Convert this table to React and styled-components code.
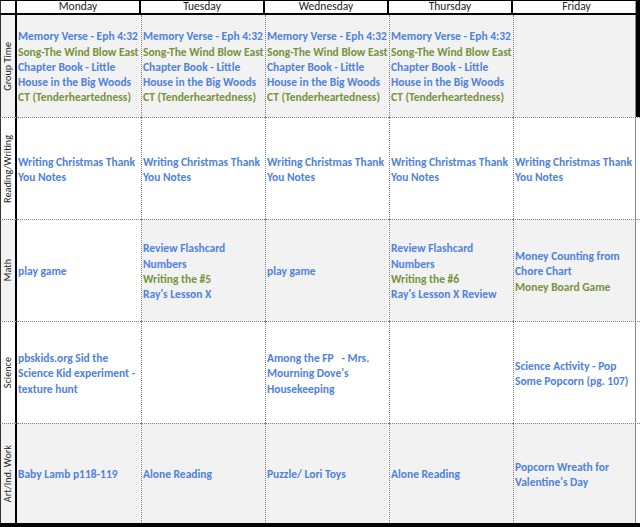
import React from "react";
import styled, { createGlobalStyle } from "styled-components";

const Global = createGlobalStyle`
  html, body { margin: 0; padding: 0; background: #ffffff; }
  body { font-family: "Carlito", "Lato", sans-serif; }
`;

const GRAY = "#f2f2f2";
const BLUE = "#4f82dc";
const GREEN = "#77933c";

const Frame = styled.div`
  width: 640px;
  height: 527px;
  box-sizing: border-box;
  display: grid;
  grid-template-columns: 17px repeat(4, 124px) 1fr;
  grid-template-rows: 15px repeat(4, 102px) 100px;
  border-bottom: 4px solid #000;
  overflow: hidden;
`;

const Corner = styled.div`
  box-sizing: border-box;
  background: #fff;
  border-left: 1px solid #333;
  border-top: 1px solid #000;
  border-right: 2px solid #000;
  border-bottom: 2px solid #000;
`;

const DayHead = styled.div`
  box-sizing: border-box;
  background: #fff;
  border-top: 1px solid #000;
  border-bottom: 2px solid #000;
  border-right: ${(p) => (p.$last ? "none" : "2px solid #000")};
  display: flex;
  align-items: center;
  justify-content: center;
  font-family: "Carlito", "Lato", sans-serif;
  font-size: 11.5px;
  color: #1c1c1c;
  line-height: 1;
  ${(p) =>
    p.$last &&
    `box-shadow: inset -4px 0 0 #000, inset -5px 0 0 #9a9a9a;`}
`;

const Label = styled.div`
  box-sizing: border-box;
  background: ${(p) => p.$bg};
  border-left: 1px solid #333;
  border-right: 2px solid #000;
  border-top: ${(p) => (p.$first ? "none" : "1px dotted #808080")};
  display: flex;
  align-items: center;
  justify-content: center;
  overflow: hidden;
`;

const LabelText = styled.span`
  writing-mode: vertical-rl;
  transform: rotate(180deg);
  white-space: nowrap;
  font-family: "Carlito", "Lato", sans-serif;
  font-size: 10.2px;
  color: #1c1c1c;
  line-height: 1;
`;

const Cell = styled.div`
  box-sizing: border-box;
  background: ${(p) => p.$bg};
  border-top: ${(p) => (p.$first ? "none" : "1px dotted #808080")};
  border-left: ${(p) => (p.$col === 0 ? "none" : "1px dotted #808080")};
  display: flex;
  flex-direction: column;
  justify-content: center;
  padding: 3px 0 0 1px;
  overflow: hidden;
  ${(p) =>
    p.$col === 4 &&
    (p.$first
      ? `box-shadow: inset -4px 0 0 #000, inset -5px 0 0 #8a8a8a;`
      : `box-shadow: inset -4px 0 0 #fff, inset -5px 0 0 #8a8a8a;`)}
`;

const Line = styled.span`
  display: block;
  white-space: pre;
  font-family: "Carlito", "Lato", sans-serif;
  font-weight: 700;
  font-size: 11.5px;
  line-height: 15.33px;
  color: ${(p) => (p.$g ? GREEN : BLUE)};
`;

const b = (t) => ({ t, g: false });
const g = (t) => ({ t, g: true });

const days = ["Monday", "Tuesday", "Wednesday", "Thursday", "Friday"];

const groupLines = [
  b("Memory Verse - Eph 4:32"),
  g("Song-The Wind Blow East"),
  b("Chapter Book - Little"),
  b("House in the Big Woods"),
  g("CT (Tenderheartedness)"),
];
const writing = [b("Writing Christmas Thank"), b("You Notes")];

const rows = [
  {
    label: "Group Time",
    labelBg: GRAY,
    cells: [
      { bg: GRAY, lines: groupLines },
      { bg: GRAY, lines: groupLines },
      { bg: GRAY, lines: groupLines },
      { bg: GRAY, lines: groupLines },
      { bg: GRAY, lines: [] },
    ],
  },
  {
    label: "Reading/Writing",
    labelBg: "#fff",
    cells: days.map(() => ({ bg: "#fff", lines: writing })),
  },
  {
    label: "Math",
    labelBg: GRAY,
    cells: [
      { bg: "#fff", lines: [b("play game")] },
      {
        bg: GRAY,
        lines: [b("Review Flashcard"), b("Numbers"), g("Writing the #5"), b("Ray's Lesson X")],
      },
      { bg: GRAY, lines: [b("play game")] },
      {
        bg: GRAY,
        lines: [b("Review Flashcard"), b("Numbers"), g("Writing the #6"), b("Ray's Lesson X Review")],
      },
      {
        bg: GRAY,
        lines: [b("Money Counting from"), b("Chore Chart"), g("Money Board Game")],
      },
    ],
  },
  {
    label: "Science",
    labelBg: "#fff",
    cells: [
      {
        bg: "#fff",
        lines: [b("pbskids.org Sid the"), b("Science Kid experiment -"), b("texture hunt")],
      },
      { bg: "#fff", lines: [] },
      {
        bg: "#fff",
        lines: [b("Among the FP   - Mrs."), b("Mourning Dove's"), b("Housekeeping")],
      },
      { bg: "#fff", lines: [] },
      {
        bg: "#fff",
        lines: [b("Science Activity - Pop"), b("Some Popcorn (pg. 107)")],
      },
    ],
  },
  {
    label: "Art/Ind. Work",
    labelBg: GRAY,
    cells: [
      { bg: GRAY, lines: [b("Baby Lamb p118-119")] },
      { bg: GRAY, lines: [b("Alone Reading")] },
      { bg: GRAY, lines: [b("Puzzle/ Lori Toys")] },
      { bg: GRAY, lines: [b("Alone Reading")] },
      { bg: GRAY, lines: [b("Popcorn Wreath for"), b("Valentine's Day")] },
    ],
  },
];

export default function App() {
  return (
    <>
      <Global />
      <Frame>
        <Corner />
        {days.map((d, i) => (
          <DayHead key={d} $last={i === 4}>
            {d}
          </DayHead>
        ))}
        {rows.map((r, ri) => (
          <React.Fragment key={r.label}>
            <Label $bg={r.labelBg} $first={ri === 0}>
              <LabelText>{r.label}</LabelText>
            </Label>
            {r.cells.map((c, ci) => (
              <Cell key={ci} $bg={c.bg} $col={ci} $first={ri === 0}>
                {c.lines.map((l, li) => (
                  <Line key={li} $g={l.g}>
                    {l.t}
                  </Line>
                ))}
              </Cell>
            ))}
          </React.Fragment>
        ))}
      </Frame>
    </>
  );
}
